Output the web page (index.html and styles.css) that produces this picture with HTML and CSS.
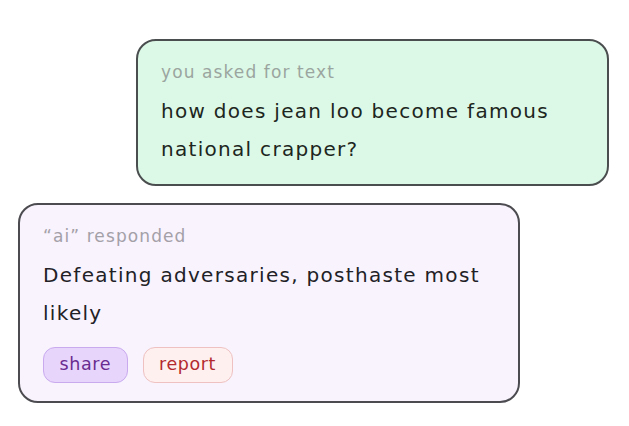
FILE: index.html
```html
<!DOCTYPE html>
<html>
<head>
<meta charset="utf-8">
<link rel="stylesheet" href="styles.css">
</head>
<body>
<main class="chat">
  <section class="card card-user">
    <div class="label">you asked for text</div>
    <div class="msg">how does jean loo become famous national crapper?</div>
  </section>
  <section class="card card-ai">
    <div class="label">“ai” responded</div>
    <div class="msg">Defeating adversaries, posthaste most likely</div>
    <div class="actions">
      <button class="btn btn-share">share</button>
      <button class="btn btn-report">report</button>
    </div>
  </section>
</main>
</body>
</html>
```
FILE: styles.css
```css
* { box-sizing: border-box; }
html, body { margin: 0; padding: 0; background: #ffffff; }
body { font-family: "DejaVu Sans", "Open Sans", sans-serif; }
.chat {
  display: flex;
  flex-direction: column;
  gap: 17px;
  padding-top: 39px;
}
.card {
  border: 2.5px solid #4b4e4f;
  border-radius: 20px;
  padding: 18px 22px 16px 23px;
}
.card-user {
  margin-left: 136px;
  width: 473px;
  background: #dcf9e7;
}
.card-ai {
  margin-left: 18px;
  width: 502px;
  background: #f8f3fd;
  border-color: #4c4b50;
  padding-bottom: 18px;
}
.label {
  font-size: 17px;
  line-height: 26px;
  color: #9ba59f;
  letter-spacing: 1.1px;
}
.card-ai .label { color: #a4a0a8; }
.msg {
  font-size: 20px;
  line-height: 38px;
  color: #1d2621;
  letter-spacing: 1.3px;
  margin-top: 7px;
}
.card-ai .msg { color: #222126; }
.actions {
  display: flex;
  gap: 15px;
  margin-top: 15px;
}
.btn {
  font-family: inherit;
  font-size: 17.5px;
  height: 36px;
  padding: 0 15.5px;
  border-radius: 12px;
  border: 1px solid;
  line-height: 1;
  letter-spacing: 0.6px;
}
.btn-share {
  background: #e8d5fc;
  border-color: #c9aaee;
  color: #6a2c90;
}
.btn-report {
  background: #fdf0ef;
  border-color: #efc1c1;
  color: #b32a2e;
}
```
